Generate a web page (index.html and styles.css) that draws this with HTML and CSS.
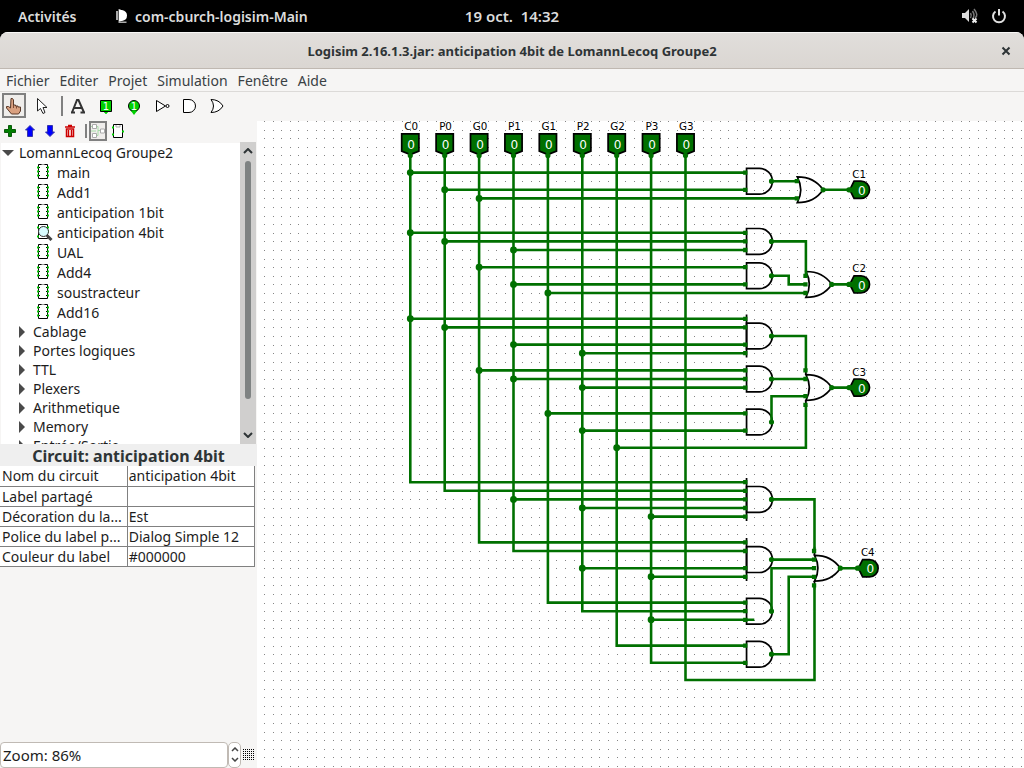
FILE: index.html
```html
<!DOCTYPE html>
<html lang="fr">
<head>
<meta charset="utf-8">
<title>Logisim 2.16.1.3.jar: anticipation 4bit de LomannLecoq Groupe2</title>
<link rel="stylesheet" href="styles.css">
</head>
<body>
<svg class="defs" width="0" height="0" aria-hidden="true">
  <symbol id="i-circuit" viewBox="0 0 14 16">
    <path d="M2.500 .500h9v14h-9z" fill="#fff" stroke="#000"/>
    <path d="M5.500 .500h3" stroke="#999"/>
    <path d="M1 3.500h2M1 7.500h2M1 11.500h2M11 3.500h2M11 7.500h2M11 11.500h2" stroke="#00c800" stroke-width="2"/>
    <path d="M3 3.500h1M3 7.500h1M3 11.500h1M10 3.500h1M10 7.500h1M10 11.500h1" stroke="#000"/>
  </symbol>
  <symbol id="i-viewed" viewBox="0 0 18 18">
    <path d="M2.500 1.500h9v14h-9z" fill="#fff" stroke="#000"/>
    <path d="M11 4.500h2M11 8.500h2M1 4.500h2M1 13.500h2" stroke="#00c800" stroke-width="2"/>
    <circle cx="7.500" cy="8.500" r="5" fill="#d8fbff" stroke="#333"/>
    <path d="M11 12.500l4.500 4.500" stroke="#444" stroke-width="3"/>
  </symbol>
</svg>

<header class="topbar">
  <button class="top-btn activities">Activités</button>
  <button class="top-btn app">
    <svg width="12" height="14" viewBox="0 0 12 14"><path d="M1 2v9M3.500 0v13.500h7" stroke="#aaa" stroke-width="2" fill="none"/><path d="M3 1h3q5 1 5 5.500t-5 5.500H3z" fill="#fff"/></svg>
    <span>com-cburch-logisim-Main</span>
  </button>
  <time class="clock">19 oct.&nbsp; 14:32</time>
  <div class="status">
    <svg width="18" height="16" viewBox="0 0 18 16"><path d="M1 5h3l4-4v13l-4-4H1z" fill="#ddd"/><path d="M9.500 5q1.500 2.500 0 5M11.500 3q3 4.500 0 8M13 1q5 6 1 9" stroke="#777" fill="none" stroke-width="1.500"/><path d="M11.500 10.500l4 4m0-4l-4 4" stroke="#eee" stroke-width="2"/></svg>
    <svg width="16" height="16" viewBox="0 0 16 16"><path d="M4.500 3.500a6 6 0 1 0 7 0M8 1v6.500" stroke="#e0e0e0" stroke-width="2" fill="none"/></svg>
  </div>
</header>

<div class="window">
  <div class="titlebar">
    <h1>Logisim 2.16.1.3.jar: anticipation 4bit de LomannLecoq Groupe2</h1>
    <button class="close" aria-label="Fermer"><svg width="10" height="10" viewBox="0 0 10 10"><path d="M1.500 1.500l7 7m0-7l-7 7" stroke="#2e3436" stroke-width="2"/></svg></button>
  </div>
  <nav class="menubar">
    <button>Fichier</button><button>Editer</button><button>Projet</button><button>Simulation</button><button>Fenêtre</button><button>Aide</button>
  </nav>

  <div class="toolbar">
    <button class="tool selected" aria-label="Poke"><svg width="18" height="18" viewBox="0 0 18 18"><path d="M6 1.500h1.500L8.500 3v5h2v1h2.500v1h2.500v4l-2 3H6.500L1.500 11V9.500h2L5.500 11z" fill="#d9a080" stroke="#5a3a2a"/><path d="M8.500 8v3M11.500 9v2.500" stroke="#7a4a34"/></svg></button>
    <button class="tool" aria-label="Selection"><svg width="18" height="18" viewBox="0 0 18 18"><path d="M4.500 1.500v12.500l3-2.500 2.500 5 2-1-2-5h4z" fill="#fff" stroke="#222"/></svg></button>
    <span class="rule"></span>
    <button class="tool" aria-label="Texte"><svg width="18" height="18" viewBox="0 0 18 18"><path d="M3 15.500L8 3h1.500L15 15.500M4.500 11h8M2 15.500h4M11.500 15.500H16" fill="none" stroke="#333" stroke-width="2"/></svg></button>
    <button class="tool" aria-label="Entrée"><svg width="18" height="18" viewBox="0 0 18 18"><path d="M6 14h6l-3 3z" fill="#00d000"/><path d="M3.500 3.500h11v11h-11z" fill="#00d000" stroke="#000"/><path d="M7 15h4l-2 2z" fill="#00d000"/><text x="9" y="13" class="one">1</text></svg></button>
    <button class="tool" aria-label="Sortie"><svg width="18" height="18" viewBox="0 0 18 18"><circle cx="9" cy="9" r="5.500" fill="#00d000" stroke="#000"/><path d="M6 14h6l-3 4z" fill="#00d000"/><text x="9" y="13" class="one">1</text></svg></button>
    <button class="tool" aria-label="Porte NON"><svg width="18" height="18" viewBox="0 0 18 18"><path d="M3.500 3.500l9 5.500-9 5.500z" fill="#fff" stroke="#000"/><circle cx="14.500" cy="9" r="1.500" fill="#fff" stroke="#000"/></svg></button>
    <button class="tool" aria-label="Porte ET"><svg width="18" height="18" viewBox="0 0 18 18"><path d="M2.500 2.500H8a6.500 6.500 0 0 1 0 13H2.500z" fill="#fff" stroke="#000"/></svg></button>
    <button class="tool" aria-label="Porte OU"><svg width="18" height="18" viewBox="0 0 18 18"><path d="M2 2.500q8 0 12 6.500-4 6.500-12 6.500 5-6.500 0-13z" fill="#fff" stroke="#000"/></svg></button>
  </div>

  <main class="work">
    <aside class="side">
      <div class="mini">
        <button aria-label="Ajouter"><svg width="14" height="14" viewBox="0 0 14 14"><path d="M5.500 1.500h3v4h4v3h-4v4h-3v-4h-4v-3h4z" fill="#008000" stroke="#0a5a0a"/></svg></button>
        <button aria-label="Monter"><svg width="14" height="14" viewBox="0 0 14 14"><path d="M7 1.500l4.500 4.500H9.500v6.500h-5V6H2.500z" fill="#00f" stroke="#33a"/></svg></button>
        <button aria-label="Descendre"><svg width="14" height="14" viewBox="0 0 14 14"><path d="M7 12.500L2.500 8h2V1.500h5V8h2z" fill="#00f" stroke="#33a"/></svg></button>
        <button aria-label="Supprimer"><svg width="14" height="14" viewBox="0 0 14 14"><path d="M2 3h10M5 1.500h4" stroke="#c00" stroke-width="1.500"/><path d="M3.500 5h7v7.500h-7zM5.500 6v6M8.500 6v6" stroke="#c00" fill="#fff" stroke-width="1.500"/></svg></button>
        <span class="rule"></span>
        <button class="selected" aria-label="Circuit"><svg width="16" height="16" viewBox="0 0 16 16"><path d="M5 3.500h3v4h3M5 12.500h3v-5M1 3.500h1M1 8h5" stroke="#a8dca8" fill="none"/><path d="M2.500 1.500h4v4h-4zM2.500 10.500h4v4h-4zM10.500 6h4v4h-4z" fill="#fff" stroke="#aaa"/></svg></button>
        <button aria-label="Apparence"><svg width="16" height="16" viewBox="0 0 16 16"><path d="M3.500 1.500h9v13h-9z" fill="#fff" stroke="#000"/><path d="M6 2v2h4V2" stroke="#aaa" fill="none"/><path d="M2 4.500h2M2 11.500h2M12 8.500h2" stroke="#00d000" stroke-width="2"/></svg></button>
      </div>

      <div class="explorer">
        <ul class="tree">
          <li class="row root"><svg class="tri" width="12" height="8" viewBox="0 0 12 8"><path d="M0 1h12L6 7z" fill="#4a4a4a"/></svg>LomannLecoq Groupe2</li>
          <li class="row item"><svg width="14" height="16"><use href="#i-circuit"/></svg>main</li>
          <li class="row item"><svg width="14" height="16"><use href="#i-circuit"/></svg>Add1</li>
          <li class="row item"><svg width="14" height="16"><use href="#i-circuit"/></svg>anticipation 1bit</li>
          <li class="row item viewed"><svg width="18" height="18"><use href="#i-viewed"/></svg>anticipation 4bit</li>
          <li class="row item"><svg width="14" height="16"><use href="#i-circuit"/></svg>UAL</li>
          <li class="row item"><svg width="14" height="16"><use href="#i-circuit"/></svg>Add4</li>
          <li class="row item"><svg width="14" height="16"><use href="#i-circuit"/></svg>soustracteur</li>
          <li class="row item"><svg width="14" height="16"><use href="#i-circuit"/></svg>Add16</li>
          <li class="row lib">Cablage</li>
          <li class="row lib">Portes logiques</li>
          <li class="row lib">TTL</li>
          <li class="row lib">Plexers</li>
          <li class="row lib">Arithmetique</li>
          <li class="row lib">Memory</li>
          <li class="row lib">Entrée/Sortie</li>
        </ul>
        <div class="scroll">
          <button aria-label="Haut"><svg width="10" height="6" viewBox="0 0 10 6"><path d="M1 5l4-4 4 4" fill="none" stroke="#2e3436" stroke-width="2"/></svg></button>
          <span class="thumb"></span>
          <button aria-label="Bas"><svg width="10" height="6" viewBox="0 0 10 6"><path d="M1 1l4 4 4-4" fill="none" stroke="#2e3436" stroke-width="2"/></svg></button>
        </div>
      </div>

      <h2>Circuit: anticipation 4bit</h2>
      <table class="attrs">
        <tr><th scope="row">Nom du circuit</th><td>anticipation 4bit</td></tr>
        <tr><th scope="row">Label partagé</th><td></td></tr>
        <tr><th scope="row">Décoration du la...</th><td>Est</td></tr>
        <tr><th scope="row">Police du label p...</th><td>Dialog Simple 12</td></tr>
        <tr><th scope="row">Couleur du label</th><td>#000000</td></tr>
      </table>

      <div class="zoom">
        <input type="text" value="Zoom: 86%" aria-label="Zoom">
        <div class="spin">
          <button aria-label="Zoom avant"><svg width="8" height="5" viewBox="0 0 8 5"><path d="M1 4l3-3 3 3" fill="none" stroke="#444" stroke-width="1.500"/></svg></button>
          <button aria-label="Zoom arrière"><svg width="8" height="5" viewBox="0 0 8 5"><path d="M1 1l3 3 3-3" fill="none" stroke="#444" stroke-width="1.500"/></svg></button>
        </div>
        <button class="gridbtn" aria-label="Grille"><svg width="11" height="11" viewBox="0 0 11 11"><path d="M0 .5h11M0 2.500h11M0 4.500h11M0 6.500h11M0 8.500h11M0 10.500h11" stroke="#000" stroke-dasharray="1 1" shape-rendering="crispEdges"/></svg></button>
      </div>
    </aside>

    <svg class="canvas" role="img" aria-label="Circuit anticipation 4bit">
      <defs>
        <pattern id="dots" x="7" y="0" width="43" height="43" patternUnits="userSpaceOnUse">
          <path shape-rendering="crispEdges" stroke="#858585" stroke-width="1" d="M0 .5h1m8 0h1m7 0h1m8 0h1m7 0h1M0 9.500h1m8 0h1m7 0h1m8 0h1m7 0h1M0 17.500h1m8 0h1m7 0h1m8 0h1m7 0h1M0 26.500h1m8 0h1m7 0h1m8 0h1m7 0h1M0 34.500h1m8 0h1m7 0h1m8 0h1m7 0h1"/>
        </pattern>
        <path id="and" d="M0-15h15a15 15 0 0 1 0 30H0z"/>
        <path id="or" d="M0 0q-10-15-30-15q8 15 0 30q20 0 30-15z"/>
        <path id="pin" d="M-10-25h20v20L0-1l-10-4z"/>
        <path id="out" d="M1 0l5-10h8a10 10 0 0 1 0 20H6z"/>
      </defs>
      <rect width="100%" height="100%" fill="url(#dots)"/>
      <g transform="translate(-1.500 0) scale(.86)">
        <g class="gate">
          <use href="#and" x="571" y="70"/><use href="#and" x="571" y="140"/><use href="#and" x="571" y="180"/>
          <use href="#and" x="571" y="250"/><use href="#and" x="571" y="300"/><use href="#and" x="571" y="350"/>
          <use href="#and" x="571" y="440"/><use href="#and" x="571" y="510"/><use href="#and" x="571" y="570"/><use href="#and" x="571" y="620"/>
          <use href="#or" x="660" y="80"/><use href="#or" x="670" y="190"/><use href="#or" x="670" y="310"/><use href="#or" x="680" y="520"/>
          <path d="M571 225v50M571 415v50M571 485v50M640 285v10M640 325v10M650 495v10M650 535v10"/>
        </g>
        <path class="wire" d="M180 38V420H570M220 38V430H570M260 38V490H570M300 38V500H570M340 38V560H570M380 38V570H570M420 38V610H570M460 38V630H570M500 38V650H650V540
          M180 60H570M220 80H570M260 90H630M180 130H570M220 140H570M300 150H570M260 170H570M300 190H570M340 200H640
          M180 230H570M220 240H570M300 260H570M380 270H570M260 290H570M300 300H570M380 310H570M340 340H570M380 360H570M420 380H640V330
          M300 440H570M380 450H570M460 460H570M380 520H570M460 530H570M460 580H580
          M600 70H630M600 140H640V180M600 180H620V190H640M600 250H640V290M600 300H640M600 350V320H640
          M600 440H650V500M600 510H650M600 570V520H650M600 620H620V530H650
          M660 80H692M670 190H692M670 310H692M680 520H702"/>
        <path class="joint" d="M180 60h0M180 130h0M180 230h0M220 80h0M220 140h0M220 240h0M260 90h0M260 170h0M260 290h0M300 150h0M300 190h0M300 260h0M300 300h0M300 440h0M340 200h0M340 340h0M380 270h0M380 310h0M380 360h0M380 450h0M380 520h0M420 380h0M460 460h0M460 530h0M460 580h0"/>
        <path class="port" d="M567 60h5M567 80h5M567 130h5M567 140h5M567 150h5M567 170h5M567 190h5M567 230h5M567 240h5M567 260h5M567 270h5M567 290h5M567 300h5M567 310h5M567 340h5M567 360h5M567 420h5M567 430h5M567 440h5M567 450h5M567 460h5M567 490h5M567 500h5M567 520h5M567 530h5M567 560h5M567 570h5M567 580h5M567 610h5M567 630h5
          M627 70h5M627 90h5M637 180h5M637 190h5M637 200h5M637 290h5M637 300h5M637 320h5M637 330h5M647 500h5M647 510h5M647 520h5M647 530h5M647 540h5"/>
        <g class="pins">
          <use href="#pin" x="180" y="40"/><use href="#pin" x="220" y="40"/><use href="#pin" x="260" y="40"/><use href="#pin" x="300" y="40"/><use href="#pin" x="340" y="40"/><use href="#pin" x="380" y="40"/><use href="#pin" x="420" y="40"/><use href="#pin" x="460" y="40"/><use href="#pin" x="500" y="40"/>
          <use href="#out" x="690" y="80"/><use href="#out" x="690" y="190"/><use href="#out" x="690" y="310"/><use href="#out" x="700" y="520"/>
        </g>
        <path class="tip" d="M600 70h0M600 140h0M600 180h0M600 250h0M600 300h0M600 350h0M600 440h0M600 510h0M600 570h0M600 620h0M660 80h0M670 190h0M670 310h0M680 520h0M690 80h2M690 190h2M690 310h2M700 520h2M180 40h0M220 40h0M260 40h0M300 40h0M340 40h0M380 40h0M420 40h0M460 40h0M500 40h0"/>
        <g class="value">
          <text x="181" y="32">0</text><text x="221" y="32">0</text><text x="261" y="32">0</text><text x="301" y="32">0</text><text x="341" y="32">0</text><text x="381" y="32">0</text><text x="421" y="32">0</text><text x="461" y="32">0</text><text x="501" y="32">0</text>
          <text x="705" y="86">0</text><text x="705" y="196">0</text><text x="705" y="316">0</text><text x="715" y="526">0</text>
        </g>
        <g class="label">
          <text x="181" y="11">C0</text><text x="221" y="11">P0</text><text x="261" y="11">G0</text><text x="301" y="11">P1</text><text x="341" y="11">G1</text><text x="381" y="11">P2</text><text x="421" y="11">G2</text><text x="461" y="11">P3</text><text x="501" y="11">G3</text>
          <text x="702" y="66">C1</text><text x="702" y="176">C2</text><text x="702" y="296">C3</text><text x="712" y="506">C4</text>
        </g>
      </g>
    </svg>
  </main>
</div>
</body>
</html>
```
FILE: styles.css
```css
* { box-sizing: border-box; }
html, body { height: 100%; }
body {
  margin: 0;
  display: flex;
  flex-direction: column;
  background: #000;
  color: #1c1c1c;
  font-family: "Noto Sans", "Open Sans", sans-serif;
  font-size: 14px;
  overflow: hidden;
}
button {
  margin: 0;
  padding: 0;
  border: 0;
  background: none;
  color: inherit;
  font: inherit;
  display: flex;
  align-items: center;
  justify-content: center;
}
svg { display: block; flex: none; }
.defs { position: absolute; }

.topbar {
  flex: none;
  height: 32px;
  display: grid;
  grid-template-columns: 1fr auto 1fr;
  grid-template-areas: "left clock status";
  align-items: center;
  padding: 0 18px;
  color: #dcdcdc;
  font-weight: 600;
}
.activities { grid-area: left; justify-self: start; }
.app { grid-area: left; justify-self: start; margin-left: 98px; gap: 7px; white-space: nowrap; }
.clock { grid-area: clock; font-size: 15px; }
.status { grid-area: status; justify-self: end; display: flex; gap: 12px; margin-right: -1px; }

.window {
  flex: 1;
  min-height: 0;
  display: flex;
  flex-direction: column;
  background: #f6f5f4;
  border-radius: 8px 8px 0 0;
  overflow: hidden;
}
.titlebar {
  flex: none;
  height: 37px;
  display: grid;
  grid-template-columns: 36px 1fr 36px;
  align-items: center;
  background: linear-gradient(#e1dedb, #dad6d2);
  border-top: 1px solid #f8f7f6;
  border-bottom: 1px solid #bfb8b1;
}
.titlebar h1 {
  grid-column: 2;
  margin: 0;
  text-align: center;
  font-size: 13px;
  font-weight: 700;
  color: #2e3436;
}
.menubar {
  flex: none;
  height: 23px;
  display: flex;
  align-items: center;
  gap: 10px;
  padding: 0 6px;
  border-bottom: 1px solid #dcdad8;
  color: #3a4144;
}
.toolbar {
  flex: none;
  height: 29px;
  display: flex;
  align-items: center;
  gap: 4px;
  padding: 0 2px 2px;
}
.tool { width: 24px; height: 25px; }
.selected { border: 2px solid #808080; background: #efedeb; }
.toolbar .rule { width: 5px; height: 20px; border-right: 2px solid #808080; margin-right: -1px; }
.one { fill: #fff; font: 10px "DejaVu Sans", sans-serif; text-anchor: middle; }

.work { flex: 1; min-height: 0; display: flex; }
.side { flex: none; width: 257px; display: flex; flex-direction: column; }
.canvas { flex: 1; min-width: 0; height: 100%; background: #fff; }

.mini { flex: none; height: 21px; display: flex; align-items: flex-start; }
.mini button { width: 20px; height: 20px; }
.mini .rule { width: 7px; height: 14px; border-right: 2px solid #808080; margin: 3px 2px 0 0; }
.mini .rule + button { width: 18px; }
.mini button:last-child { width: 22px; }

.explorer { flex: none; height: 302px; display: flex; overflow: hidden; margin-right: 1px; }
.tree {
  flex: 1;
  margin: 1px 0 0 1px;
  padding: 0;
  list-style: none;
  background: #fff;
  overflow: hidden;
}
.row { display: flex; align-items: center; height: 20px; white-space: nowrap; }
.root { height: 19px; gap: 5px; padding-left: 1px; }
.item { gap: 7px; padding-left: 35px; }
.viewed { gap: 3px; }
.lib { height: 19px; gap: 8px; padding-left: 18px; }
.lib::before {
  content: "";
  border-left: 6px solid #4a4a4a;
  border-top: 6px solid transparent;
  border-bottom: 6px solid transparent;
}
.scroll { width: 16px; display: flex; flex-direction: column; align-items: center; background: #d0cfce; }
.scroll button { width: 16px; height: 18px; }
.thumb { width: 6px; height: 238px; border-radius: 3px; background: #7f8383; margin: 1px 0 auto; }

.side h2 {
  flex: none;
  margin: 0;
  height: 22px;
  line-height: 24px;
  background: #efefef;
  text-align: center;
  font-size: 16px;
  font-weight: 700;
  color: #2e3436;
}
.attrs {
  width: 255px;
  border-collapse: collapse;
  table-layout: fixed;
  background: #fff;
}
.attrs th, .attrs td {
  height: 20px;
  padding: 0 0 0 1px;
  border: 1px solid #808080;
  border-top: 0;
  text-align: left;
  font-weight: 400;
  line-height: 19px;
  white-space: nowrap;
  overflow: hidden;
}
.attrs th { border-left: 0; padding-left: 2px; }

.zoom { margin-top: auto; height: 27px; display: flex; align-items: center; }
.zoom input {
  flex: none;
  width: 228px;
  height: 26px;
  padding: 0 2px;
  border: 1px solid #c0bab4;
  border-radius: 4px;
  background: #fff;
  color: inherit;
  font: inherit;
  font-size: 15px;
}
.spin {
  width: 13px;
  height: 26px;
  display: flex;
  flex-direction: column;
  justify-content: space-evenly;
  align-items: center;
  border: 1px solid #c0bab4;
  border-radius: 5px;
  background: #fff;
}
.gridbtn { margin-left: 2px; }

.gate { fill: none; stroke: #000; stroke-width: 2; }
.wire, .joint, .port, .tip { fill: none; stroke: #007000; }
.wire { stroke-width: 3; }
.joint { stroke-width: 8; stroke-linecap: round; }
.port { stroke-width: 5; }
.tip { stroke-width: 6; stroke-linecap: round; }
.pins { fill: #007000; stroke: #000; stroke-width: 2; }
.value, .label { font-family: "DejaVu Sans", sans-serif; text-anchor: middle; }
.value { fill: #fff; font-size: 14px; }
.label { fill: #000; font-size: 12px; }
```
